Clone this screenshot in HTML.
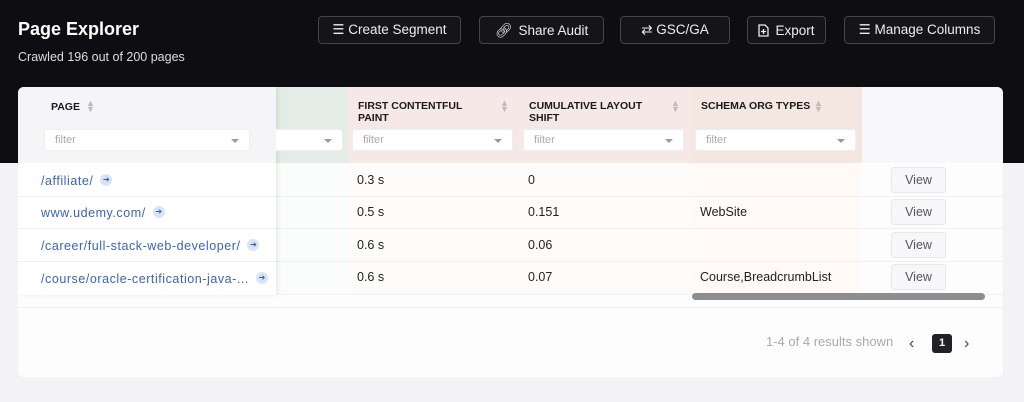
<!DOCTYPE html>
<html><head><meta charset="utf-8"><style>
*{box-sizing:border-box;margin:0;padding:0}
body{width:1024px;height:402px;overflow:hidden;background:#f3f3f6;font-family:"Liberation Sans",sans-serif;position:relative}
.hdr{position:absolute;left:0;top:0;width:1024px;height:163px;background:#0e0d12}
.abs{position:absolute}
h1{position:absolute;left:18px;top:19px;color:#fff;font-size:18px;font-weight:bold}
.sub{left:18px;top:50px;color:#ddd;font-size:12.5px}
.btn{position:absolute;top:16px;height:28px;border:1px solid #44444a;border-radius:4px;background:#141419;color:#eee;font-size:13.5px;display:flex;align-items:center;justify-content:center;gap:6px}
.card{position:absolute;left:18px;top:87px;width:985px;height:290px;background:#fdfdfe;border-radius:6px;overflow:hidden}
.col{position:absolute;top:0;height:208px}
.th{position:absolute;top:13px;font-size:10.5px;font-weight:bold;color:#1a1a1a;line-height:12px}
.sort{position:absolute;color:#bbb;font-size:9px;line-height:6px}
.filt{position:absolute;top:42px;height:22px;background:#fff;border-radius:3px;border:1px solid #eee;font-size:11px;color:#aaa;padding:4px 10px}
.filt:after{content:"";position:absolute;right:10px;top:9px;border:4px solid transparent;border-top:4px solid #999}
.cell{position:absolute;font-size:12.5px;color:#222}
.link{position:absolute;font-size:12.5px;color:#3a63b8;left:23px;letter-spacing:0.55px}
.dot{display:inline-block;width:12px;height:12px;border-radius:50%;background:#dbe4f5;color:#2b5cc4;font-size:8px;line-height:12px;text-align:center;vertical-align:3px;margin-left:7px;letter-spacing:0}
.row{position:absolute;left:0;width:985px;height:1px;background:#f0eff2}
.view{position:absolute;left:873px;width:55px;height:26px;border:1px solid #e8e8ec;background:#f7f7f9;border-radius:3px;font-size:12.5px;color:#555;text-align:center;line-height:24px}
</style></head><body>
<div class="hdr"></div>
<h1>Page Explorer</h1>
<div class="abs sub">Crawled 196 out of 200 pages</div>
<div class="btn" style="left:318px;width:143px">☰ Create Segment</div>
<div class="btn" style="left:479px;width:125px"><span style="font-size:14px">🔗︎</span> Share Audit</div>
<div class="btn" style="left:620px;width:110px">⇄ GSC/GA</div>
<div class="btn" style="left:747px;width:79px"><svg width="11" height="13" viewBox="0 0 11 13"><path d="M1 1h6l3 3v8H1z M5.5 5v5 M3 7.5h5" stroke="#eee" fill="none" stroke-width="1.3"/></svg> Export</div>
<div class="btn" style="left:844px;width:151px">☰ Manage Columns</div>

<div class="card">
 <div class="col" style="left:258px;width:72px;height:76px;background:#e3ece6"></div>
 <div class="col" style="left:258px;top:76px;width:72px;height:132px;background:#fbfdfc"></div>
 <div class="col" style="left:330px;width:342px;height:76px;background:#f7e8e8"></div>
 <div class="col" style="left:330px;top:76px;width:342px;height:132px;background:#fefbfb"></div>
 <div class="col" style="left:672px;width:172px;height:76px;background:#f4e6e0"></div>
 <div class="col" style="left:672px;top:76px;width:172px;height:132px;background:#fffaf6"></div>
 <div class="col" style="left:844px;width:141px;height:76px;background:#f8f8fa"></div>
 <div class="row" style="top:109px"></div><div class="row" style="top:141px"></div><div class="row" style="top:174px"></div><div class="row" style="top:207px"></div>
 <div class="col" style="left:0;width:258px;height:208px;background:#fff;box-shadow:2px 0 4px rgba(0,0,0,.08)">
  <div style="position:absolute;left:0;top:0;width:258px;height:76px;background:#f5f5f7"></div>
  <div class="th" style="left:33px;top:14px">PAGE</div><div class="sort" style="left:68px;top:13px">▲<br>▼</div>
  <div class="filt" style="left:26px;width:206px">filter</div>
  <div class="link" style="top:87px">/affiliate/<span class="dot">➔</span></div>
  <div class="link" style="top:119px">www.udemy.com/<span class="dot">➔</span></div>
  <div class="link" style="top:152px">/career/full-stack-web-developer/<span class="dot">➔</span></div>
  <div class="link" style="top:185px">/course/oracle-certification-java-...<span class="dot">➔</span></div>
  <div class="row" style="top:109px;width:258px"></div><div class="row" style="top:141px;width:258px"></div><div class="row" style="top:174px;width:258px"></div>
 </div>
 <div class="filt" style="left:258px;width:67px;border-left:none;border-radius:0 3px 3px 0"></div>
 <div class="th" style="left:340px">FIRST CONTENTFUL<br>PAINT</div><div class="sort" style="left:482px;top:13px">▲<br>▼</div>
 <div class="filt" style="left:334px;width:161px">filter</div>
 <div class="th" style="left:511px">CUMULATIVE LAYOUT<br>SHIFT</div><div class="sort" style="left:653px;top:13px">▲<br>▼</div>
 <div class="filt" style="left:505px;width:161px">filter</div>
 <div class="th" style="left:683px">SCHEMA ORG TYPES</div><div class="sort" style="left:796px;top:13px">▲<br>▼</div>
 <div class="filt" style="left:677px;width:161px">filter</div>
 <div class="cell" style="left:339px;top:86px">0.3 s</div><div class="cell" style="left:510px;top:86px">0</div>
 <div class="cell" style="left:339px;top:118px">0.5 s</div><div class="cell" style="left:510px;top:118px">0.151</div><div class="cell" style="left:682px;top:118px">WebSite</div>
 <div class="cell" style="left:339px;top:151px">0.6 s</div><div class="cell" style="left:510px;top:151px">0.06</div>
 <div class="cell" style="left:339px;top:183px">0.6 s</div><div class="cell" style="left:510px;top:183px">0.07</div><div class="cell" style="left:682px;top:183px">Course,BreadcrumbList</div>
 <div class="view" style="top:80px">View</div><div class="view" style="top:112px">View</div><div class="view" style="top:145px">View</div><div class="view" style="top:177px">View</div>
 <div style="position:absolute;left:674px;top:206px;width:293px;height:7px;border-radius:4px;background:#8e8d90"></div>
 <div style="position:absolute;left:0;top:220px;width:985px;height:1px;background:#f0f0f2"></div>
 <div class="cell" style="left:748px;top:247px;color:#aaa;font-size:13px">1-4 of 4 results shown</div>
 <div class="cell" style="left:891px;top:248px;color:#444;font-size:16px">‹</div>
 <div style="position:absolute;left:914px;top:247px;width:20px;height:19px;background:#222226;border-radius:3px;color:#fff;font-size:11px;font-weight:bold;text-align:center;line-height:19px">1</div>
 <div class="cell" style="left:946px;top:248px;color:#444;font-size:16px">›</div>
</div>
</body></html>
